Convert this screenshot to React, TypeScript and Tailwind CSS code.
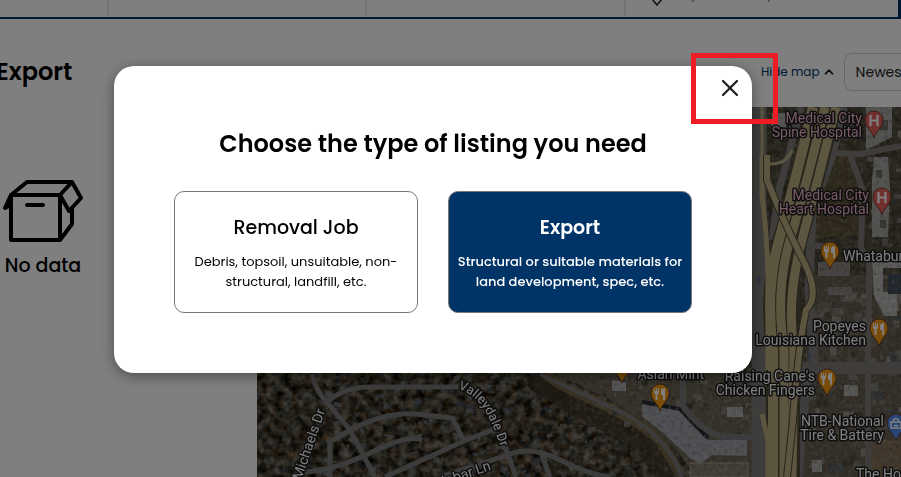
import React from "react";
import { X, ChevronUp } from "lucide-react";

function seeded(seed: number) {
  let s = seed;
  return () => {
    s = (s * 16807) % 2147483647;
    return s / 2147483647;
  };
}

type Patch = { x: number; y: number; w: number; h: number; r: number; fill: string };

function scatter(seed: number, n: number, box: number[], colors: string[], min: number, max: number): Patch[] {
  const rnd = seeded(seed);
  return Array.from({ length: n }, () => ({
    x: box[0] + rnd() * box[2],
    y: box[1] + rnd() * box[3],
    w: min + rnd() * (max - min),
    h: min + rnd() * (max - min) * 0.7,
    r: rnd() * 80 - 40,
    fill: colors[Math.floor(rnd() * colors.length)],
  }));
}

const houses = scatter(41, 150, [320, 374, 290, 103], ["#6e747c", "#80848c", "#4f5a70", "#6a6a64", "#5f5848", "#5c4a38"], 2, 8);
const lots = scatter(97, 120, [808, 290, 93, 187], ["#8c8b88", "#5d5446", "#a6a29a", "#47433a", "#7d7568", "#54606a"], 3, 13).map((p) => ({ ...p, r: p.r / 12 }));
const plaza = scatter(23, 60, [600, 374, 150, 60], ["#4b463c", "#8e8a82", "#6f675a", "#343a30"], 2, 8).map((p) => ({ ...p, r: p.r / 8 }));
const roofs = scatter(61, 26, [862, 107, 39, 150], ["#8c8b88", "#5d5446", "#a6a29a", "#3f3d34"], 3, 10).map((p) => ({ ...p, r: p.r / 12 }));

function Patches({ items }: { items: Patch[] }) {
  return (
    <g opacity="0.7">
      {items.map((p, i) => (
        <rect key={i} x={p.x} y={p.y} width={p.w} height={p.h} fill={p.fill} transform={`rotate(${p.r} ${p.x} ${p.y})`} />
      ))}
    </g>
  );
}

function Pin({ x, y, kind }: { x: number; y: number; kind: "food" | "hospital" | "shop" }) {
  const fill = kind === "food" ? "#f29a12" : kind === "hospital" ? "#e0605c" : "#5288ee";
  return (
    <g transform={`translate(${x} ${y})`}>
      <path d="M0 17C-2 10-9 6-9-1a9 9 0 0 1 18 0c0 7-7 11-9 18Z" fill={fill} stroke="#5a3018" strokeWidth="0.8" />
      {kind === "food" && (
        <g fill="#fff">
          <path d="M-6-6h1v3h1v-3h1v3h1v-3h1v4q0 2-1.500 2.500V6h-2V.5Q-6 0-6-2Z" />
          <path d="M1-4q1-2 4-2V6H3V1H1Z" />
        </g>
      )}
      {kind === "hospital" && <path d="M-3.500-6v11M3.500-6v11M-3.500-.5h7" stroke="#fff" strokeWidth="2.200" />}
      {kind === "shop" && (
        <path d="M-5-2H5v6H-5ZM-2.500-2v-2q2.500-3 5 0v2M-2 1q2 2 4 0" fill="none" stroke="#fff" strokeWidth="1.500" />
      )}
    </g>
  );
}

function Label({ x, y, lines, anchor = "end", pink = false, rotate = 0 }: { x: number; y: number; lines: string[]; anchor?: "start" | "middle" | "end"; pink?: boolean; rotate?: number }) {
  return (
    <text
      x={x}
      y={y}
      textAnchor={anchor}
      transform={`rotate(${rotate} ${x} ${y})`}
      className="font-['Roboto',sans-serif] text-[14px]"
      fill={pink ? "#f2b4cc" : "#ffffff"}
      stroke="#1c1c1c"
      strokeWidth="3"
      strokeLinejoin="round"
      paintOrder="stroke"
    >
      {lines.map((l, i) => (
        <tspan key={l} x={x} dy={i === 0 ? 0 : 14}>
          {l}
        </tspan>
      ))}
    </text>
  );
}

function SatelliteMap() {
  return (
    <svg viewBox="257 107 644 370" preserveAspectRatio="xMinYMin slice" className="block h-full w-full" role="img" aria-label="Map">
      <defs>
        <filter id="trees" x="0" y="0" width="100%" height="100%" colorInterpolationFilters="sRGB">
          <feTurbulence type="fractalNoise" baseFrequency="0.12" numOctaves="5" seed="8" />
          <feColorMatrix values=".75 .2 0 0 -.2  .75 .05 .1 0 -.2  .75 -.05 .2 0 -.25  0 0 0 0 1" />
        </filter>
        <filter id="grit" x="0" y="0" width="100%" height="100%" colorInterpolationFilters="sRGB">
          <feTurbulence type="fractalNoise" baseFrequency="0.25" numOctaves="3" seed="3" />
          <feColorMatrix values="1.2 0 0 0 -.1  1.2 0 0 0 -.12  1.2 0 0 0 -.16  0 1.5 0 0 -.45" />
        </filter>
        <path id="valleydale" d="M458 389C478 395 488 410 500 445" />
      </defs>

      <rect x="257" y="107" width="644" height="370" filter="url(#trees)" />
      <Patches items={houses} />

      {/* creek */}
      <path d="M535 374C560 405 610 415 650 450L668 477" fill="none" stroke="#3c3426" strokeWidth="22" opacity=".8" />
      <path d="M545 374C570 395 620 405 660 440L682 477" fill="none" stroke="#806c4c" strokeWidth="10" opacity=".8" />

      {/* shopping plaza */}
      <path d="M555 370H752V477H695Q665 420 555 374Z" fill="#6a6253" />
      <Patches items={plaza} />
      <path d="M642 403L680 411 702 432 708 440H747V456L712 455 700 464 690 458 662 432 642 416Z" fill="#a0a4aa" />
      <path d="M642 402L680 409 708 438" fill="none" stroke="#22252c" strokeWidth="4" />
      <path d="M612 380l14 2v9h-14ZM727 407h16v10h-16Z" fill="#aeb2b4" />
      <path d="M690 463h58v14h-58Z" fill="#867c6c" stroke="#b0a898" />

      {/* commercial strip east of the highway */}
      <path d="M752 107H901V477H752Z" fill="#4c4938" opacity=".7" />
      <path d="M810 275H901V477H800Z" fill="#655d4e" />
      <Patches items={lots} />
      <Patches items={roofs} />
      <path d="M832 155L853 152 862 190 858 235 815 238 818 200Z" fill="#5c5036" />
      <path d="M826 170l30 10M824 186l34 10M822 202l36 10M819 218l34 8" stroke="#4a442c" strokeWidth="2" />
      <path d="M866 107h26v30l-26 13ZM874 157h14l2 30-2 50h-16V180Z" fill="#a8a8a6" />
      <path d="M880 120h8v10h-8ZM876 170h6v8h-6ZM880 220h6v8h-6Z" fill="#66645e" />
      <path d="M872 262h29v6h-18v24h14v24h-13l-10-20Z" fill="#bcbcba" />
      <path d="M888 274h13v20h-13Z" fill="#3d4a56" />
      <path d="M818 262h32v14h-32ZM828 287h24v8h-24Z" fill="#8f8684" />
      <path d="M868 440h33v37h-33Z" fill="#826e56" />
      <path d="M772 113h14v14h-14ZM844 385h14v11h-14ZM812 460h10v12h-10Z" fill="#b0b0ac" />

      <rect x="570" y="107" width="331" height="370" filter="url(#grit)" opacity=".45" />

      {/* local streets */}
      <g fill="none" stroke="#787878" strokeWidth="5" strokeLinejoin="round">
        <path d="M312 374Q316 392 327 402L350 430 375 477" />
        <path d="M327 402Q345 387 368 387H458" />
        <path d="M330 477V442L350 430Q385 412 415 414L452 418 464 441" />
        <path d="M305 472Q335 470 372 452T422 440" />
        <path d="M385 477L464 441 492 430M500 437L508 455M440 477L508 455Q530 445 560 460T610 477" />
        <path d="M540 450L550 477M500 432L516 477" />
        <path d="M540 374L610 407Q665 430 682 477" strokeWidth="4" />
        <path d="M683 374V406Q700 430 722 437H758" strokeWidth="6" />
      </g>
      <g fill="none" stroke="#7c7a78" strokeWidth="9" strokeLinejoin="round">
        <path d="M759 107V477" strokeWidth="15" />
        <path d="M801 107Q790 150 779 190L772 240" strokeWidth="7" />
        <path d="M843 107L832 155 812 210 809 290 814 360 806 385 798 477" />
        <path d="M832 153L860 154 901 146M850 155L863 190 861 248 869 260V300L868 350" strokeWidth="6" />
        <path d="M795 368H901M752 372H800" strokeWidth="12" />
        <path d="M868 350V477M752 437H765M812 246H830" strokeWidth="6" />
      </g>

      {/* highway */}
      <g fill="none" stroke="#b8ab80" strokeLinejoin="round">
        <path d="M825 107Q805 190 790 240T783 350V477" stroke="#4e4836" strokeWidth="34" />
        <path d="M813 107Q793 190 779 240T773 350V477" strokeWidth="10" />
        <path d="M825 107Q805 190 790 240T784 350V477" strokeWidth="9" />
        <path d="M836 107Q818 180 802 240T794 350L792 477" strokeWidth="9" />
        <path d="M762 155V195Q768 240 768 290V370" strokeWidth="5" />
        <path d="M767 155V180Q785 225 803 260T806 310Q798 350 793 420L787 477" stroke="#4e4836" strokeWidth="8" />
        <path d="M767 155V180Q785 225 803 260T806 310Q798 350 793 420L787 477" strokeWidth="6" />
        <path d="M762 155V107M792 150Q787 164 770 164" strokeWidth="3" />
        <path d="M762 414L768 440V477" strokeWidth="5" />
      </g>
      <g fill="none" stroke="#5a6488" strokeWidth="1.500">
        <path d="M759 281v-6m-2 4l2 3 2-3M809 362v-8m-2 3l2-3 2 3M825 174l2-5M768 217v-5" />
      </g>

      <Pin x={874} y={121} kind="hospital" />
      <Pin x={882} y={198} kind="hospital" />
      <Pin x={830} y={252} kind="food" />
      <Pin x={879} y={329} kind="food" />
      <Pin x={827} y={379} kind="food" />
      <Pin x={660} y={394} kind="food" />
      <Pin x={622} y={366} kind="food" />
      <Pin x={896} y={424} kind="shop" />

      <Label x={862} y={123} lines={["Medical City", "Spine Hospital"]} pink />
      <Label x={869} y={200} lines={["Medical City", "Heart Hospital"]} pink />
      <Label x={843} y={261} lines={["Whataburger"]} anchor="start" />
      <Label x={866} y={331} lines={["Popeyes", "Louisiana Kitchen"]} />
      <Label x={815} y={381} lines={["Raising Cane's", "Chicken Fingers"]} />
      <Label x={704} y={379} lines={["Asian Mint"]} />
      <Label x={884} y={426} lines={["NTB-National", "Tire & Battery"]} />
      <Label x={856} y={479} lines={["The Home Depot"]} anchor="start" />
      <Label x={296} y={496} lines={["St Michaels Dr"]} anchor="start" rotate={-71} />
      <Label x={444} y={486} lines={["lobar Ln"]} anchor="start" rotate={-19} />
      <text className="font-['Roboto',sans-serif] text-[13px]" fill="#fff" stroke="#1c1c1c" strokeWidth="3" paintOrder="stroke">
        <textPath href="#valleydale">Valleydale Dr</textPath>
      </text>
    </svg>
  );
}

function EmptyBox() {
  return (
    <svg viewBox="0 0 82 64" className="h-16 w-[82px]" fill="none" stroke="#000" strokeWidth="4" strokeLinejoin="round" strokeLinecap="round" aria-hidden="true">
      <path d="M9 16H58V61H9ZM9 16L25 3H70L58 16M58 61L70 45V30M58 16L70 3 79 19 67 32ZM9 16L3 29 9 26M25 26H41" />
    </svg>
  );
}

function ListingOption({ title, text, active = false }: { title: string; text: string; active?: boolean }) {
  return (
    <button
      type="button"
      className={
        "flex h-[122px] flex-1 flex-col items-center rounded-[10px] border border-[#777] px-2 pt-[22px] text-center " +
        (active ? "bg-[#003366] font-medium text-white" : "bg-white text-black")
      }
    >
      <span className={active ? "text-[19px] leading-7 font-semibold" : "text-[19px] leading-7 font-medium"}>{title}</span>
      <span className="mt-[10px] text-[13px] leading-5">{text}</span>
    </button>
  );
}

export default function App() {
  return (
    <div className="relative flex min-h-screen flex-col overflow-hidden bg-white font-['Poppins','Inter',sans-serif] text-black">
      <header className="flex h-[19px] items-start border-b-2 border-[#003366]">
        <div className="h-[15px] w-[109px] border-r-2 border-[#e4e4e4]" />
        <div className="h-[15px] w-[258px] border-r-2 border-[#e4e4e4]" />
        <div className="h-[15px] w-[259px] border-r-2 border-[#e4e4e4]" />
        <div className="flex h-[17px] flex-1 items-end gap-4 overflow-hidden pb-[11px] pl-6">
          <svg viewBox="0 0 14 18" className="h-[18px] w-[14px] shrink-0" fill="none" stroke="#222" strokeWidth="1.5" aria-hidden="true">
            <path d="M7 17L2 11Q0 8 1 5Q3 1 7 1T13 5Q14 8 12 11Z" />
          </svg>
          <span className="mb-1 shrink-0 text-[14px] leading-[18px] text-[#777]">Zip code, City,</span>
        </div>
        <div className="h-[17px] w-[3px] bg-[#003366]" />
      </header>

      <div className="flex h-[88px] items-center pt-[18px]">
        <h1 className="-ml-1 text-[24px] leading-8 font-semibold">Export</h1>
        <div className="ml-auto flex w-[140px] shrink-0 items-center gap-2">
          <button type="button" className="flex shrink-0 items-center gap-[2px] text-[12px] whitespace-nowrap text-[#003366]">
            Hide map
            <ChevronUp className="size-[14px] text-black" strokeWidth={3} />
          </button>
          <select aria-label="Sort order" className="h-[38px] w-[120px] shrink-0 appearance-none rounded-lg border border-[#ccc] bg-transparent px-[11px] text-[14px] text-[#222]">
            <option>Newest</option>
          </select>
        </div>
      </div>

      <main className="flex flex-1">
        <section className="w-[257px] shrink-0 pt-[72px] pl-[2px]">
          <div className="flex w-[82px] flex-col items-center">
            <EmptyBox />
            <p className="mt-[9px] text-[19px] leading-7 font-medium whitespace-nowrap">No data</p>
          </div>
        </section>
        <section className="h-[370px] min-w-0 flex-1">
          <SatelliteMap />
        </section>
      </main>

      <div className="absolute inset-0 flex items-start justify-center bg-black/50 pt-[66px] pr-[35px]">
        <div role="dialog" aria-modal="true" aria-labelledby="dialog-title" className="relative w-full max-w-[638px] rounded-[20px] bg-white px-[60px] pt-[62px] pb-[60px] shadow-[0_3px_14px_rgba(0,0,0,0.4)]">
          <button type="button" aria-label="Close" className="absolute top-[8px] right-[8px]">
            <X className="size-7 text-[#222]" strokeWidth={2} />
          </button>
          <h2 id="dialog-title" className="text-center text-[24px] leading-8 font-semibold">
            Choose the type of listing you need
          </h2>
          <div className="mt-[31px] flex gap-[30px]">
            <ListingOption title="Removal Job" text="Debris, topsoil, unsuitable, non-structural, landfill, etc." />
            <ListingOption title="Export" text="Structural or suitable materials for land development, spec, etc." active />
          </div>
          <div className="pointer-events-none absolute -top-[13px] -right-[26px] h-[71px] w-[87px] border-[5px] border-[#ee1c25]" />
        </div>
      </div>
    </div>
  );
}
